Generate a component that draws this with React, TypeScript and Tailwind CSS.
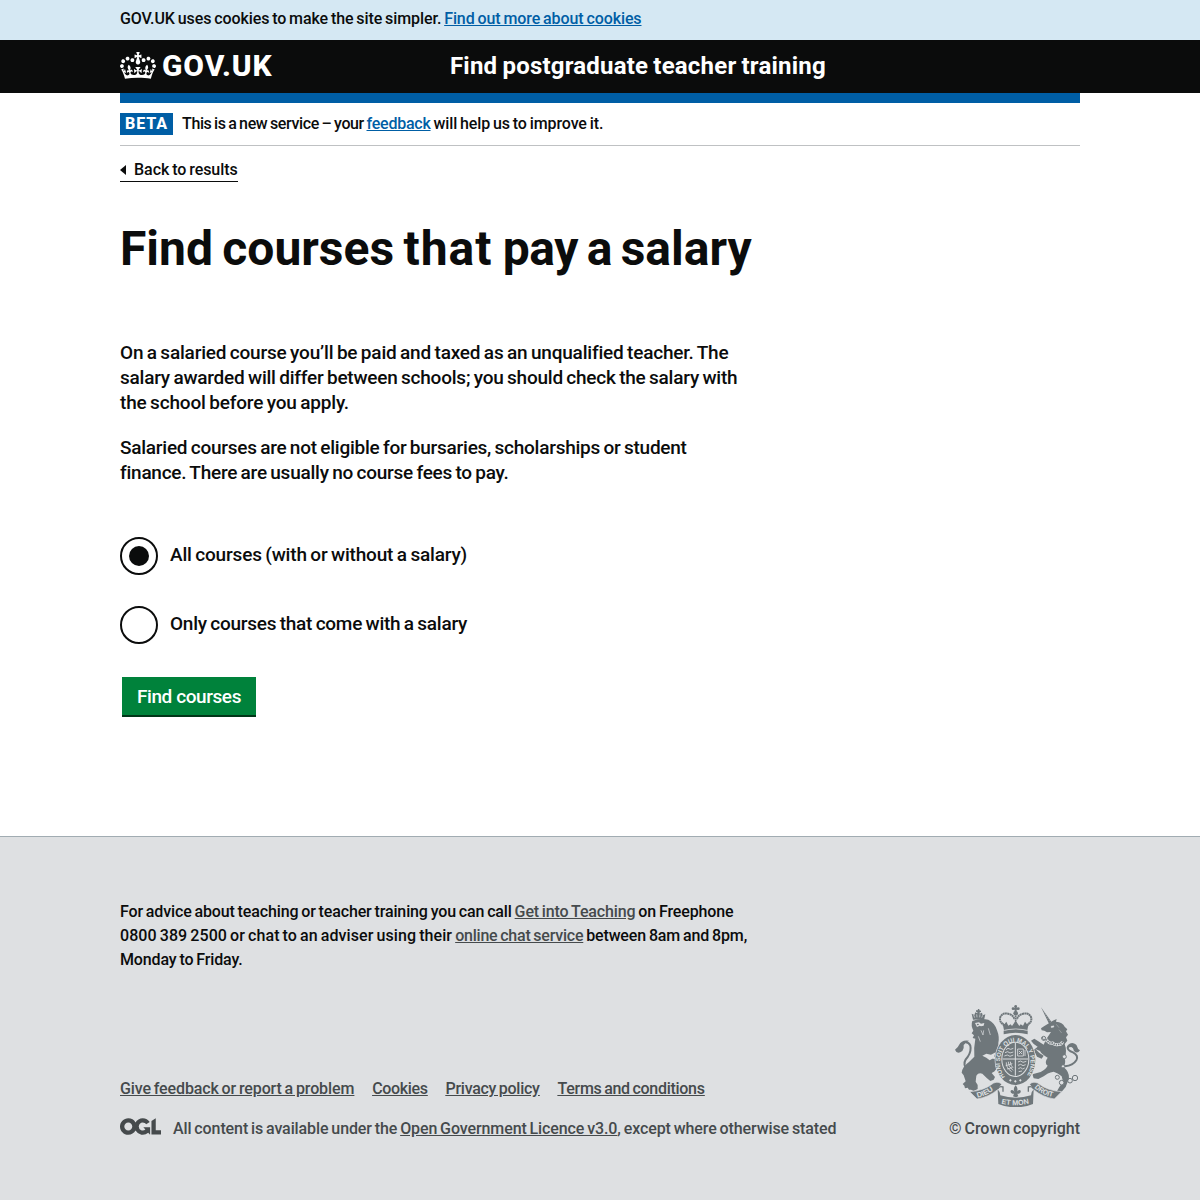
function Crown() {
  return (
    <svg className="h-[27px] w-9 shrink-0" viewBox="0 0 132 97" preserveAspectRatio="none" fill="currentColor" aria-hidden="true">
      <path d="M25 30.2c3.5 1.5 7.7-.2 9.1-3.7 1.5-3.6-.2-7.8-3.9-9.2-3.6-1.4-7.6.3-9.1 3.9-1.4 3.5.3 7.5 3.9 9zM9 39.5c3.6 1.5 7.8-.2 9.2-3.7 1.5-3.6-.2-7.8-3.9-9.1-3.6-1.5-7.6.2-9.1 3.8-1.4 3.5.3 7.5 3.8 9zM4.4 57.2c3.5 1.5 7.7-.2 9.1-3.8 1.5-3.6-.2-7.7-3.9-9.1-3.5-1.5-7.6.3-9.1 3.8-1.4 3.5.3 7.6 3.9 9.1zm38.3-21.4c3.5 1.5 7.7-.2 9.1-3.8 1.5-3.6-.2-7.7-3.9-9.1-3.6-1.5-7.6.3-9.1 3.8-1.3 3.6.4 7.7 3.9 9.1zm64.4-5.6c-3.6 1.5-7.8-.2-9.1-3.7-1.5-3.6.2-7.8 3.8-9.2 3.6-1.4 7.7.3 9.2 3.9 1.3 3.5-.4 7.5-3.9 9zm15.9 9.3c-3.6 1.5-7.7-.2-9.1-3.7-1.5-3.6.2-7.8 3.7-9.1 3.6-1.5 7.7.2 9.2 3.8 1.5 3.5-.3 7.5-3.8 9zm4.7 17.7c-3.6 1.5-7.8-.2-9.2-3.8-1.5-3.6.2-7.7 3.9-9.1 3.6-1.5 7.7.3 9.2 3.8 1.3 3.5-.4 7.6-3.9 9.1zM89.3 35.8c-3.6 1.5-7.8-.2-9.2-3.8-1.4-3.6.2-7.7 3.9-9.1 3.6-1.5 7.7.3 9.2 3.8 1.4 3.6-.3 7.7-3.9 9.1zM69.7 17.7l8.9 4.7V9.3l-8.9 2.8c-.2-.3-.5-.6-.9-.9L72.4 0H59.6l3.5 11.2c-.3.3-.6.5-.9.9l-8.8-2.8v13.1l8.8-4.7c.3.3.6.7.9.9l-5 15.4v.1c-.2.8-.4 1.6-.4 2.4 0 4.1 3.1 7.5 7 8.1h.2c.3 0 .7.1 1 .1.4 0 .7 0 1-.1h.2c4-.6 7.1-4.1 7.1-8.1 0-.8-.1-1.7-.4-2.4V34l-5.1-15.4c.4-.2.7-.6 1-.9zM66 92.8c16.9 0 32.8 1.1 47.1 3.2 4-16.9 8.9-26.7 14-33.5l-9.6-3.4c1 4.9 1.1 7.2 0 10.2-1.5-1.4-3-4.3-4.2-8.7L108.6 76c2.8-2 5-3.2 7.5-3.3-4.4 9.4-10 11.9-13.6 11.2-4.3-.8-6.3-4.6-5.6-7.9 1-4.7 5.7-5.9 8-.5 4.3-8.7-3-11.4-7.6-8.8 7.1-7.2 7.9-13.5 2.1-21.1-8 6.1-8.1 12.3-4.5 20.8-4.7-5.4-12.1-2.5-9.5 6.2 3.4-5.2 7.9-2 7.2 3.1-.6 4.3-6.4 7.8-13.5 7.2-10.3-.9-10.9-8-11.2-13.8 2.5-.5 7.1 1.8 11 7.3L80.2 60c-4.1 4.4-8 5.3-12.3 5.4 1.4-4.4 8-11.6 8-11.6H55.5s6.4 7.2 7.9 11.6c-4.2-.1-8-1-12.3-5.4l1.4 16.4c3.9-5.5 8.5-7.7 10.9-7.3-.3 5.8-.9 12.8-11.1 13.8-7.2.6-12.9-2.9-13.5-7.2-.7-5 3.8-8.3 7.1-3.1 2.7-8.7-4.6-11.6-9.4-6.2 3.7-8.5 3.6-14.7-4.6-20.8-5.8 7.6-5 13.9 2.2 21.1-4.7-2.6-11.9.1-7.7 8.8 2.3-5.5 7.1-4.2 8.1.5.7 3.3-1.3 7.1-5.7 7.9-3.5.7-9-1.8-13.5-11.2 2.5.1 4.7 1.3 7.5 3.3l-4.7-15.4c-1.2 4.4-2.7 7.2-4.3 8.7-1.1-3-.9-5.3 0-10.2l-9.5 3.4c5 6.9 9.9 16.7 14 33.5 14.8-2.1 30.8-3.2 47.7-3.2z" />
    </svg>
  );
}

function OglLogo() {
  return (
    <svg className="mt-px h-[17px] w-[41px] shrink-0" viewBox="0 0 483.2 195.7" fill="currentColor" aria-hidden="true">
      <path d="M421.5 142.8V.1l-50.7 32.3v161.1h112.4v-50.7zm-122.3-9.6A47.12 47.12 0 0 1 221 97.8c0-26 21.1-47.1 47.1-47.1 16.7 0 31.4 8.7 39.7 21.8l42.7-27.2A97.63 97.63 0 0 0 268.1 0c-36.5 0-68.3 20.1-85.1 49.7A98 98 0 0 0 97.8 0C43.9 0 0 43.9 0 97.8s43.9 97.8 97.8 97.8c36.5 0 68.3-20.1 85.1-49.7a97.76 97.76 0 0 0 149.6 25.4l19.4 22.2h3v-87.8h-80l24.3 27.5zM97.8 145c-26 0-47.1-21.1-47.1-47.1s21.1-47.1 47.1-47.1 47.1 21.1 47.1 47.1S123.8 145 97.8 145" />
    </svg>
  );
}

function RoyalArms() {
  return (
    <svg className="h-[102px] w-[125px]" viewBox="30 30 375 306" fill="#6f777b" aria-hidden="true">
      {/* lion */}
      <path d="M84 74 80 56l8 4 3-8 6 3 0-4-4-1v-4l5 0 1-4h4l0 4 5 1v4l-4 1 0 4 7-3 2 8 8-3-4 18q-16-4-33-2z" />
      <path d="m86 60 3 8M95 58l1 9M105 58l-1 9M113 61l-3 7" stroke="#dee0e2" strokeWidth="2" />
      <path d="M82 78q22-9 48-4 20 10 26 32 8 20 4 38l0 30-8 14 6 20q0 18-18 26l10 12-4 8-10 4-10-8-14-14q-12-4-18 6l-2 18 6 10 0 12-12 6-8-4-6 0-4-6-8 2-2-8-5-5 9-8-6-18-6-8q2-18 22-32l16-16q-2-28 3-54l-8-2 4-8-7-6 5-8q-8-16-3-29z" />
      <path d="m112 182 12-6 14 3 14-7-4 12 6 8-12-1-8 5-10-8z" fill="#dee0e2" />
      <path d="m90 84 12-2 6 4 10-2-2 8-8 2-4-2-8 4z" fill="#dee0e2" />
      <path d="m95 87 5-1 2 4-5 1z" />
      <path d="m108 106 6 14 2-14M130 100l6 20M100 124l6 16" fill="none" stroke="#dee0e2" strokeWidth="2" />
      <path d="M62 218q-10-16 6-32 12-18 8-34-4-10-14-10" fill="none" stroke="#6f777b" strokeWidth="6" />
      <path d="M72 137q-22-4-30 13-3 8-12 14 6 16 22 4 6-8 4-18 6-8 16-13z" />

      {/* crown */}
      <circle cx="212" cy="34" r="4" />
      <circle cx="204" cy="41" r="4" />
      <circle cx="220" cy="41" r="4" />
      <path d="M209 34h6v18h-6zM205 38h14v6h-14z" />
      <circle cx="212" cy="55" r="7" />
      <path d="M179 92q-18-12-13-26 8-15 26-9 14 4 16 16M245 92q18-12 13-26-8-15-26-9-14 4-16 16" fill="none" stroke="#6f777b" strokeWidth="6" strokeDasharray="6 1" />
      <path d="M212 62v26" stroke="#6f777b" strokeWidth="5" strokeDasharray="5 1" />
      <path d="m172 80 6 8 6-8 6 12 7-4 4 5 11-16 11 16 4-5 7 4 6-12 6 8 6-8-5 26q-35-8-70 0z" />
      <path d="M176 107q36-9 72 0v11q-36-9-72 0z" />
      <path d="M179 105q33-8 66 0" fill="none" stroke="#dee0e2" strokeWidth="1.5" />

      {/* unicorn */}
      <path d="m288 37 31 43-7 6z" />
      <path d="m293 46 22 34" stroke="#dee0e2" strokeWidth="1.2" strokeDasharray="3 4" />
      <path d="M313 84q10-8 22-12l-2 8q20 2 26 15l8 8-4 6 6 10-6 8 4 10-8 10q8 22 0 43 4 14-3 26 18 16 16 34l-10 26-12 14h-15l8-14 11-16-4-16q-12-10-24-14-20 4-30 14l-16 8-14-2-4-12 14-4q24-6 32-22-12-8 0-24-18-10-23-20l-14-6q12 14 25 20l-6 9-14-6-10-20 12-10q-14-8-20-18l10-6 12 8 16 10q4-10 10-20l12-18-12 1-8-5-8-1-2-6 9-6z" />
      <path d="M291 127q4 9 14 8 8 12 18 9 8 8 18 4 8 2 12-8" fill="none" stroke="#dee0e2" strokeWidth="9" />
      <path d="M291 127q4 9 14 8 8 12 18 9 8 8 18 4 8 2 12-8" fill="none" stroke="#6f777b" strokeWidth="5" strokeDasharray="4 3" />
      <path d="m318 94 8-2 1 4-8 2zM334 88l8 10M342 104l8 10" fill="#dee0e2" stroke="#dee0e2" />
      <path d="M360 214q24-2 34-18 8-14-10-24-16-6-16-14 2-8 12-9" fill="none" stroke="#6f777b" strokeWidth="6" />
      <path d="M366 160q0-14 16-16 12 2 14 10 2 10 9 12-8 12-18 2-2-10-8-12-6 0-13 4z" />
      <g fill="none" stroke="#6f777b" strokeWidth="3">
        <circle cx="337" cy="247" r="6" />
        <circle cx="350" cy="263" r="7" fill="#dee0e2" />
        <circle cx="375" cy="257" r="7" />
        <circle cx="390" cy="249" r="8" />
        <circle cx="358" cy="185" r="6" fill="#dee0e2" />
        <circle cx="296" cy="130" r="6" />
        <circle cx="354" cy="214" r="5" fill="#dee0e2" />
      </g>

      {/* garter and shield */}
      <ellipse cx="211" cy="195" rx="62" ry="77" fill="#dee0e2" />
      <ellipse cx="211" cy="195" rx="60" ry="75" />
      <ellipse cx="211" cy="193" rx="42" ry="53" fill="#dee0e2" />
      <ellipse cx="211" cy="193" rx="39" ry="50" />
      <path id="garter" d="M180 246A46 60 0 1 1 245 242" fill="none" />
      <text fontFamily="Liberation Sans" fontWeight="700" fontSize="19" wordSpacing="0" fill="#dee0e2">
        <textPath href="#garter" textLength="256" lengthAdjust="spacingAndGlyphs">HONI SOIT QUI MAL Y PENSE</textPath>
      </text>
      <path d="M211 144v98M173 192h76" stroke="#dee0e2" strokeWidth="3" />
      <g fill="none" stroke="#dee0e2" strokeWidth="2.5">
        <path d="m183 164 6-4 8 3 8-3M180 173l8-3 7 4 10-3M178 183l9-3 8 4 10-4" />
        <path d="m219 201 8-3 7 4 10-3M219 211l8-3 7 4 8-3M220 221l7-3 6 4 6-3M221 230l10-2" />
        <path d="M218 162h17v21h-17zM222 168l9 9M231 168l-9 9M240 165v18" />
        <path d="M184 202q-2 16 16 28M190 200q-2 14 14 26M196 200q0 12 8 18M182 212l20-6M186 222l16-4" />
      </g>
      <path d="m196 252 4 4-4 4-4-4zM211 255l4 4-4 4-4-4zM226 252l4 4-4 4-4-4z" fill="#dee0e2" />

      {/* motto scroll */}
      <path d="M74 290q42-2 72-26 16-6 24 4l-12 16q-26 22-62 28z" stroke="#dee0e2" strokeWidth="2" />
      <path d="M350 290q-42-2-72-26-16-6-24 4l12 16q26 22 62 28z" stroke="#dee0e2" strokeWidth="2" />
      <path d="M158 283q8 8 8 18 46 14 92 0 0-10 8-18l-2 44q-52 20-104 0z" />
      <path d="M158 282q4-10 16-6v14M266 282q-4-10-16-6v14" fill="none" stroke="#6f777b" strokeWidth="4" />
      <path id="dieu" d="M97 308q34-8 55-28" fill="none" />
      <path id="mon" d="M169 326q43 10 86-1" fill="none" />
      <path id="droit" d="M268 278q24 24 62 29" fill="none" />
      <g fontFamily="Liberation Sans" fontWeight="700" fontSize="22" fill="#dee0e2">
        <text><textPath href="#dieu" textLength="54" lengthAdjust="spacingAndGlyphs">DIEU</textPath></text>
        <text><textPath href="#mon" textLength="84" lengthAdjust="spacingAndGlyphs">ET MON</textPath></text>
        <text><textPath href="#droit" textLength="62" lengthAdjust="spacingAndGlyphs">DROIT</textPath></text>
      </g>
      <path d="M212 271q10 10 2 22 4-10 12-7 4 7-4 10h-5l3 8q-8 5-16 0l3-8h-5q-8-3-4-10 8-3 12 7-8-12 2-22z" />
    </svg>
  );
}

export default function App() {
  return (
    <div className="flex h-[1200px] flex-col bg-white font-['Roboto',sans-serif] font-medium text-[#0b0c0c] [word-spacing:-1px]">
      <div className="h-10 bg-[#d5e8f3]">
        <p className="mx-auto w-[960px] pt-[7px] text-base leading-6 tracking-[-0.09px]">
          GOV.UK uses cookies to make the site simpler. <a className="text-[#005ea5] underline">Find out more about cookies</a>
        </p>
      </div>
      <header className="h-[53px] bg-[#0b0c0c] text-white">
        <div className="mx-auto flex h-full w-[960px] items-center">
          <a className="flex w-[330px] items-center gap-[6px] pb-[2px]">
            <Crown />
            <span className="text-[30px] font-extrabold leading-[30px] tracking-[0.9px]">GOV.UK</span>
          </a>
          <span className="pb-[2px] text-2xl font-bold tracking-[0.2px]">Find postgraduate teacher training</span>
        </div>
      </header>
      <main className="mx-auto w-[960px] grow">
        <div className="h-[10px] bg-[#005ea5]" />
        <div className="flex h-[43px] items-center border-b border-[#bfc1c3] text-base">
          <strong className="mr-[9px] h-[22px] w-[53px] bg-[#005ea5] pl-[5px] font-extrabold leading-[22px] tracking-[0.9px] text-white">BETA</strong>
          <span>
            <span className="tracking-[-0.37px]">This is a new service – your </span>
            <a className="tracking-[-0.24px] text-[#005ea5] underline">feedback</a>
            <span className="tracking-[-0.1px]"> will help us to improve it.</span>
          </span>
        </div>
        <a className="mt-3 inline-flex h-6 items-center border-b border-[#0b0c0c] text-base tracking-[-0.05px]">
          <svg className="mr-2 h-[10px] w-[6px]" viewBox="0 0 6 10"><path d="M6 0v10L0 5z" fill="#0b0c0c" /></svg>
          Back to results
        </a>
        <h1 className="mt-[42px] text-5xl font-bold leading-[50px] [word-spacing:-2.6px]">
          Find courses <span className="tracking-[1px]">that </span><span className="tracking-[-0.5px]">pay a </span>salary
        </h1>
        <div className="mt-[66px] text-[19px] leading-[25px] tracking-[-0.23px]">
          <p>
            <span className="tracking-[-0.2px]">On a salaried course you’ll be paid and taxed as an unqualified teacher. The</span><br />
            salary awarded will differ between schools; you should check the salary with<br />
            <span className="tracking-[-0.18px]">the school before you apply.</span>
          </p>
          <p className="mt-5 tracking-[-0.25px]">Salaried courses are not eligible for bursaries, scholarships or student<br />finance. There are usually no course fees to pay.</p>
        </div>
        <div className="mt-[52px] flex flex-col gap-[31px] text-[19px]">
          <label className="flex h-[38px] items-center gap-3 tracking-[-0.18px]">
            <span className="flex size-[38px] items-center justify-center rounded-full border-2 border-[#0b0c0c]"><span className="size-5 rounded-full bg-[#0b0c0c]" /></span>
            <span className="pb-[2px]">All courses (with or without a salary)</span>
          </label>
          <label className="flex h-[38px] items-center gap-3 tracking-[-0.25px]">
            <span className="size-[38px] rounded-full border-2 border-[#0b0c0c]" />
            <span className="pb-[2px]">Only courses that come with a salary</span>
          </label>
        </div>
        <button className="ml-[2px] mt-[33px] h-10 w-[134px] border-b-2 border-[#003618] bg-[#00823b] pt-[2px] text-[19px] tracking-[-0.42px] text-white">Find courses</button>
      </main>
      <footer className="h-[364px] border-t border-[#a1acb2] bg-[#dee0e2]">
        <div className="mx-auto w-[960px] pt-[63px] text-base leading-6">
          <p className="tracking-[-0.13px]">
            For advice about teaching or teacher training you can call <a className="text-[#454a4c] underline">Get into Teaching</a> on Freephone<br />
            <span className="tracking-[0.08px]">0800 389 2500 or chat to an adviser using their </span><a className="tracking-[-0.22px] text-[#454a4c] underline">online chat service</a> between 8am and 8pm,<br />
            Monday to Friday.
          </p>
          <div className="mt-[33px] flex items-end justify-between text-[#454a4c]">
            <div>
              <div className="flex gap-[18px] underline">
                <a className="tracking-[-0.12px]">Give feedback or report a problem</a>
                <a className="tracking-[-0.36px]">Cookies</a>
                <a className="tracking-[-0.28px]">Privacy policy</a>
                <a className="tracking-[-0.3px]">Terms and conditions</a>
              </div>
              <div className="mt-4 flex tracking-[-0.1px]"><OglLogo /><span className="ml-3">All content is available under the <a className="underline">Open Government Licence v3.0</a>, except where otherwise stated</span></div>
            </div>
            <div className="flex flex-col items-end"><RoyalArms /><span className="mt-[10px] tracking-[-0.03px]">© Crown copyright</span></div>
          </div>
        </div>
      </footer>
    </div>
  );
}
